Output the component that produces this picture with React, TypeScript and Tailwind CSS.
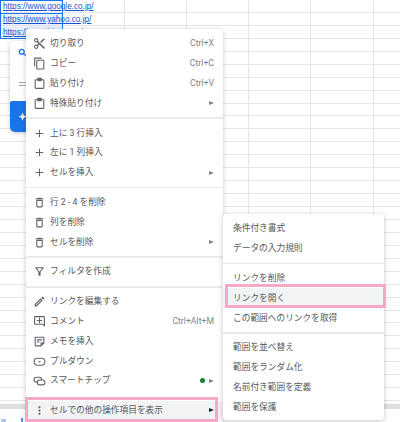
import type { ReactNode } from "react";
import {
  MdAdd,
  MdMoreVert,
  MdOutlineAddComment,
  MdOutlineContentCopy,
  MdOutlineContentCut,
  MdOutlineDelete,
  MdOutlineEdit,
  MdOutlineFilterAlt,
  MdOutlineStickyNote2,
} from "react-icons/md";

const FONT = "font-['Roboto','Noto_Sans_CJK_JP',sans-serif]";

const links = ["https://www.google.co.jp/", "https://www.yahoo.co.jp/", "https://www.bing.com/"];

function ClipboardIcon() {
  return (
    <svg viewBox="0 0 24 24" className="w-[13px] h-[13px]" fill="none" stroke="currentColor" strokeWidth="2">
      <rect x="4" y="5" width="16" height="16" rx="1" />
      <path d="M9 2.5h6V7H9z" fill="currentColor" />
    </svg>
  );
}

function DropdownIcon() {
  return (
    <svg viewBox="0 0 24 24" className="w-[13px] h-[13px]" fill="none" stroke="currentColor" strokeWidth="2">
      <rect x="2" y="6" width="20" height="13" rx="6.5" />
      <path d="M9 11.5h6l-3 3z" fill="currentColor" stroke="none" />
    </svg>
  );
}

function ChipIcon() {
  return (
    <svg viewBox="0 0 24 24" className="w-[13px] h-[13px]" fill="none" stroke="currentColor" strokeWidth="2">
      <rect x="2" y="6" width="14" height="9" rx="4.5" />
      <rect x="8" y="11" width="14" height="9" rx="4.5" fill="white" />
    </svg>
  );
}

function Arrow({ dark }: { dark?: boolean }) {
  return (
    <span
      className={`w-0 h-0 border-y-[2.5px] border-y-transparent border-l-[5px] ${dark ? "border-l-[#202124]" : "border-l-[#80868b]"}`}
    />
  );
}

function Sep() {
  return (
    <div className="h-[10px] flex items-center">
      <div className="w-full h-[1.5px] bg-[#e8eaed]" />
    </div>
  );
}

function Row({
  icon,
  label,
  hint,
  arrow,
  dot,
}: {
  icon: ReactNode;
  label: string;
  hint?: string;
  arrow?: boolean;
  dot?: boolean;
}) {
  return (
    <div className="h-[19.8px] flex items-center pl-[7px] pr-[9px] text-[8.7px] text-[#55585b]">
      <span className="w-[13px] flex justify-center text-[#5f6368] text-[13px] shrink-0">{icon}</span>
      <span className="ml-[4px]">{label}</span>
      <span className="ml-auto flex items-center gap-[4px]">
        {hint && <span className="text-[8.7px] text-[#80868b]">{hint}</span>}
        {dot && <span className="w-[5px] h-[5px] rounded-full bg-[#188038]" />}
        {arrow && <Arrow />}
      </span>
    </div>
  );
}

function SubRow({ label }: { label: string }) {
  return <div className="h-[19.8px] flex items-center pl-[10px] text-[8.7px] text-[#55585b]">{label}</div>;
}

export default function App() {
  return (
    <div className={`relative w-[400px] h-[422px] overflow-hidden bg-white ${FONT}`}>
      {/* Sheet */}
      <div className="h-[404px] overflow-hidden grid grid-cols-[repeat(7,62.3px)] auto-rows-[12.95px]">
        {Array.from({ length: 32 * 7 }).map((_, i) => {
          const col = i % 7;
          const row = Math.floor(i / 7);
          const selected = col === 0 && row < 3;
          return (
            <div
              key={i}
              className={`border-r border-b border-[#e6e6e6] whitespace-nowrap text-[8.2px] leading-[14px] pl-[3px] text-[#1155cc] underline font-['Liberation_Sans',sans-serif] ${
                selected && row > 0 ? "bg-[#e8f0fe]" : ""
              }`}
            >
              {selected ? links[row] : ""}
            </div>
          );
        })}
      </div>

      {/* Selection outline */}
      <div className="absolute left-0 top-0 w-[63px] h-[39px] border border-[#1a73e8]" />
      <div className="absolute left-0 top-0 w-[63px] h-[13.5px] border-[1.5px] border-[#1a73e8]" />

      {/* Bottom bars */}
      <div className="h-[5px] bg-[#dedfe0]" />
      <div className="h-[13px] bg-white flex items-end pl-[1px] gap-[15px]">
        <div className="w-[5px] h-[3px] bg-[#a9c7f0]" />
        <div className="w-[2px] h-[4px] bg-[#5a8fdc]" />
      </div>

      {/* Card behind the menu */}
      <div className="absolute left-[10px] top-[41px] w-[24px] h-[91px] bg-white rounded-l-[5px] shadow-[0_1px_4px_rgba(60,64,67,0.3)] flex flex-col items-start">
        <svg viewBox="0 0 24 24" className="w-[9px] h-[9px] mt-[7px] ml-[8px]" fill="none" stroke="#1a73e8" strokeWidth="3.5">
          <circle cx="10" cy="10" r="6.5" />
          <path d="M15 15l6 6" />
        </svg>
        <div className="w-[8px] h-[1px] bg-[#a0a4a8] ml-[9px] mt-[25px]" />
        <div className="w-[8px] h-[1px] bg-[#a0a4a8] ml-[9px] mt-[2px]" />
        <div className="mt-auto h-[31px] w-full bg-[#1a73e8] rounded-bl-[5px] rounded-tl-[2px] pl-[8px] flex items-center">
          <svg viewBox="0 0 24 24" className="w-[9px] h-[9px]" fill="white">
            <path d="M12 1l3 8 8 3-8 3-3 8-3-8-8-3 8-3z" />
          </svg>
        </div>
      </div>

      {/* Context menu */}
      <div className="absolute left-[26px] top-[29px] w-[197px] h-[400px] bg-white rounded-[3px] pt-[5px] shadow-[0_1px_5px_rgba(60,64,67,0.3)]">
        <Row icon={<MdOutlineContentCut />} label="切り取り" hint="Ctrl+X" />
        <Row icon={<MdOutlineContentCopy />} label="コピー" hint="Ctrl+C" />
        <Row icon={<ClipboardIcon />} label="貼り付け" hint="Ctrl+V" />
        <Row icon={<ClipboardIcon />} label="特殊貼り付け" arrow />
        <Sep />
        <Row icon={<MdAdd />} label="上に 3 行挿入" />
        <Row icon={<MdAdd />} label="左に 1 列挿入" />
        <Row icon={<MdAdd />} label="セルを挿入" arrow />
        <Sep />
        <Row icon={<MdOutlineDelete />} label="行 2 - 4 を削除" />
        <Row icon={<MdOutlineDelete />} label="列を削除" />
        <Row icon={<MdOutlineDelete />} label="セルを削除" arrow />
        <Sep />
        <Row icon={<MdOutlineFilterAlt />} label="フィルタを作成" />
        <Sep />
        <Row icon={<MdOutlineEdit />} label="リンクを編集する" />
        <Row icon={<MdOutlineAddComment />} label="コメント" hint="Ctrl+Alt+M" />
        <Row icon={<MdOutlineStickyNote2 />} label="メモを挿入" />
        <Row icon={<DropdownIcon />} label="プルダウン" />
        <Row icon={<ChipIcon />} label="スマートチップ" dot arrow />
        <div className="h-[10px]" />
        <div className="relative bg-[#f1f3f4]">
          <Row icon={<MdMoreVert />} label="セルでの他の操作項目を表示" />
          <div className="absolute right-[9px] top-[7px] flex">
            <Arrow dark />
          </div>
          <div className="absolute left-[-1px] right-[5px] top-[-4px] h-[25px] border-[3px] border-[#f5a9c8]" />
        </div>
      </div>

      {/* Sub menu */}
      <div className="absolute left-[223px] top-[214px] w-[161px] h-[206px] bg-white rounded-[3px] pt-[5px] shadow-[0_1px_5px_rgba(60,64,67,0.3)]">
        <SubRow label="条件付き書式" />
        <SubRow label="データの入力規則" />
        <Sep />
        <SubRow label="リンクを削除" />
        <div className="relative bg-[#f1f3f4]">
          <SubRow label="リンクを開く" />
          <div className="absolute left-[2px] right-[-2px] top-[-4px] h-[24px] border-[3px] border-[#f5a9c8]" />
        </div>
        <SubRow label="この範囲へのリンクを取得" />
        <Sep />
        <SubRow label="範囲を並べ替え" />
        <SubRow label="範囲をランダム化" />
        <SubRow label="名前付き範囲を定義" />
        <SubRow label="範囲を保護" />
      </div>
    </div>
  );
}
